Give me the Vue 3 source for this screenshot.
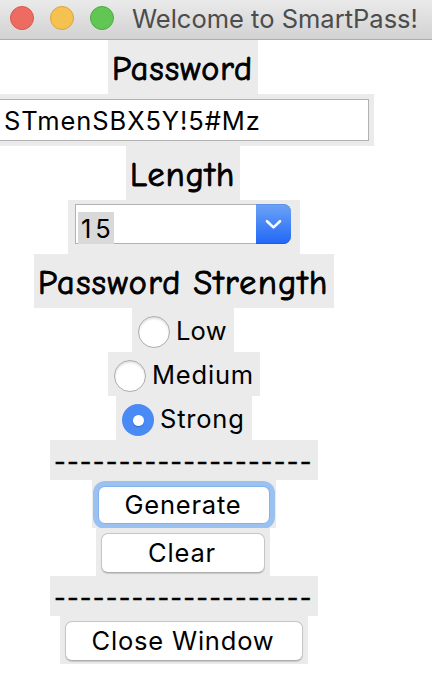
<script setup>
import { ref } from 'vue'

const password = ref('STmenSBX5Y!5#Mz')
const length = ref('15')
const strength = ref('Strong')
const levels = ['Low', 'Medium', 'Strong']
const rule = '-'.repeat(20)
</script>

<template>
  <main class="window">
    <header class="titlebar">
      <span class="light red"></span>
      <span class="light yellow"></span>
      <span class="light green"></span>
      <h1>Welcome to SmartPass!</h1>
    </header>
    <div class="content">
      <div class="panel label password"><span>Password</span></div>
      <div class="panel field"><div class="entry"><span>{{ password }}</span></div></div>
      <div class="panel label length"><span>Length</span></div>
      <div class="panel combo">
        <div class="value"><span>{{ length }}</span></div>
        <button class="arrow" aria-label="Choose length">
          <svg width="17" height="11" viewBox="0 0 17 11"><path d="M2 2.2 8.5 8.4 15 2.2" /></svg>
        </button>
      </div>
      <div class="panel label heading"><span>Password Strength</span></div>
      <div v-for="level in levels" :key="level" class="panel option" :class="level.toLowerCase()" @click="strength = level">
        <span class="radio" :class="{ checked: strength === level }"></span>
        <span class="name">{{ level }}</span>
      </div>
      <div class="panel rule"><span>{{ rule }}</span></div>
      <div class="panel action generate"><button><span>Generate</span></button></div>
      <div class="panel action clear"><button><span>Clear</span></button></div>
      <div class="panel rule"><span>{{ rule }}</span></div>
      <div class="panel action close"><button><span>Close Window</span></button></div>
    </div>
  </main>
</template>

<style>
body {
  background: #fff;
  overflow: hidden;
}
</style>

<style scoped>
* {
  box-sizing: border-box;
}
.window {
  width: 432px;
  height: 676px;
  overflow: hidden;
  background: #fff;
  color: #000;
  font: 25.5px/30px Inter, "Liberation Sans", sans-serif;
  white-space: nowrap;
}
.titlebar {
  height: 40px;
  display: flex;
  align-items: center;
  gap: 16px;
  padding: 0 0 3px 10px;
  background: linear-gradient(#eaeaea, #d2d2d2);
  border-bottom: 1px solid #adadad;
}
.light {
  flex: none;
  width: 24px;
  height: 24px;
  border-radius: 50%;
  border: 1px solid;
}
.red { background: #ed6b60; border-color: #d9584e; }
.yellow { background: #f5c251; border-color: #dca53c; }
.green { background: #62c655; border-color: #4dac3f; }
h1 {
  margin: 2px 0 0 2px;
  font-size: 25.5px;
  line-height: 30px;
  font-weight: 400;
  letter-spacing: 0;
  color: #4c4c4c;
}
.content {
  width: 368px;
  display: flex;
  flex-direction: column;
  align-items: center;
}
.panel {
  flex: none;
  display: flex;
  background: #ebebeb;
}
.label {
  height: 54px;
  align-items: center;
  padding: 3px 0 0 4px;
  font: 500 34px/40px "Comic Sans MS", "Comic Neue", "Noto Sans", sans-serif;
  letter-spacing: 1.2px;
  -webkit-text-stroke: 1px #000;
}
.password { width: 150px; margin-right: 2px; }
.length { width: 114px; margin-right: 2px; }
.heading { width: 300px; letter-spacing: 1.5px; word-spacing: -1px; }
.field {
  width: 380px;
  height: 52px;
  padding: 5px;
}
.entry {
  width: 370px;
  height: 42px;
  padding: 6px 0 0 4px;
  background: #fff;
  border: 1px solid #b1b1b1;
  letter-spacing: 0.92px;
}
.combo {
  width: 232px;
  height: 54px;
  padding: 4px 9px 10px 7px;
}
.value {
  width: 181px;
  height: 40px;
  padding: 7px 0 0 2px;
  background: #fff;
  border: 1px solid #b1b1b1;
  border-right: 0;
}
.value span {
  display: block;
  width: 36px;
  height: 32px;
  padding: 2px 0 0 3px;
  background: #d9d9d9;
  letter-spacing: 4px;
}
.arrow {
  width: 35px;
  height: 40px;
  padding: 0;
  border: 0;
  border-radius: 0 8px 8px 0;
  background: linear-gradient(#6da3f7, #2067f5);
  box-shadow: inset 0 1px #5d91e2, inset 0 -1px #1c5ce0;
  display: grid;
  place-items: center;
}
.arrow path {
  fill: none;
  stroke: #fff;
  stroke-width: 2.6;
  stroke-linecap: round;
  stroke-linejoin: round;
}
.option {
  height: 44px;
  padding: 8px 0 0 6px;
  gap: 6px;
}
.low { width: 102px; margin-right: 2px; }
.medium { width: 152px; }
.strong { width: 136px; }
.radio {
  width: 32px;
  height: 32px;
  border: 1px solid #acacac;
  border-radius: 50%;
  background: #fff;
  box-shadow: inset 0 2px 2px #e2e2e2;
  display: grid;
  place-items: center;
}
.radio.checked {
  border: 0;
  background: #4a8af5;
  box-shadow: none;
}
.checked::after {
  content: "";
  width: 11px;
  height: 11px;
  border-radius: 50%;
  background: #fff;
  box-shadow: 0 1px 1px #2c65ce;
}
.name {
  letter-spacing: 0.8px;
}
.low .name { letter-spacing: 0.2px; }
.rule {
  width: 268px;
  height: 40px;
  padding: 7px 0 0 4px;
  letter-spacing: 1.2px;
  -webkit-text-stroke: 0.4px #000;
}
.action {
  height: 48px;
  padding: 5px;
}
.action button {
  width: 100%;
  height: 40px;
  padding: 0 2px 0 0;
  border: 1px solid #c6c6c6;
  border-bottom-color: #adadad;
  border-radius: 7px;
  background: #fff;
  box-shadow: 0 1px 1px #c9c9c9;
  font: inherit;
  color: #000;
  letter-spacing: 0.8px;
}
.generate { width: 184px; padding: 6px; }
.generate button {
  height: 38px;
  border-color: #82b2ed;
  box-shadow: 0 0 0 5px #9bc1f1;
}
.clear { width: 174px; margin-right: 2px; }
.close { width: 248px; }
</style>
